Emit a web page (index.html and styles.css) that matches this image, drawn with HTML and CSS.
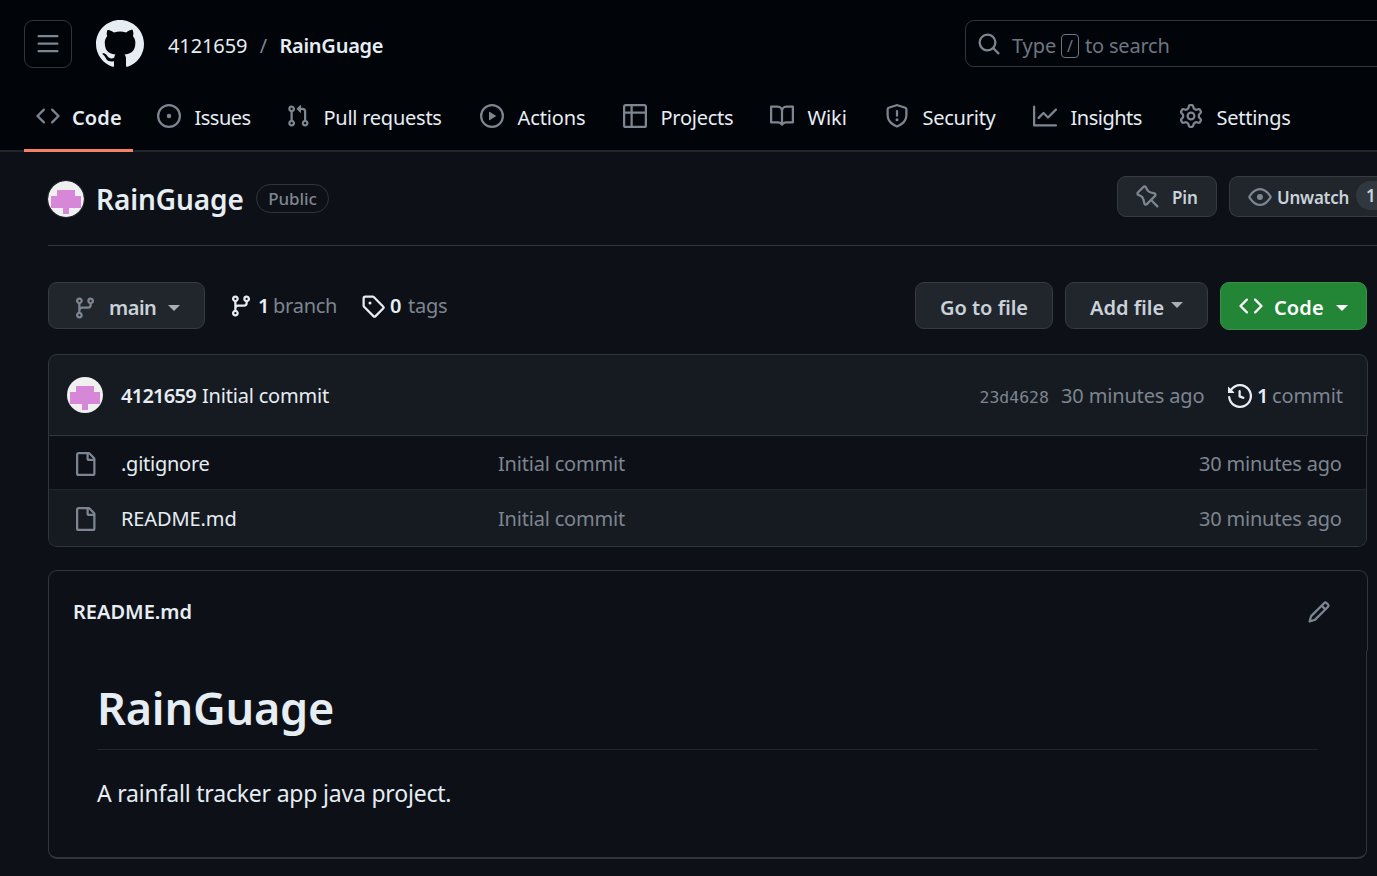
FILE: index.html
```html
<!DOCTYPE html>
<html lang="en">
<head>
<meta charset="utf-8">
<title>4121659/RainGuage</title>
<link rel="stylesheet" href="styles.css">
</head>
<body>
<svg class="sprite" aria-hidden="true">
  <symbol id="code" viewBox="0 0 16 16"><path d="m11.28 3.22 4.25 4.25a.75.75 0 0 1 0 1.06l-4.25 4.25a.749.749 0 0 1-1.275-.326.749.749 0 0 1 .215-.734L13.94 8l-3.72-3.72a.749.749 0 0 1 .326-1.275.749.749 0 0 1 .734.215Zm-6.56 0a.751.751 0 0 1 1.042.018.751.751 0 0 1 .018 1.042L2.06 8l3.72 3.72a.749.749 0 0 1-.326 1.275.749.749 0 0 1-.734-.215L.47 8.53a.75.75 0 0 1 0-1.06Z"/></symbol>
  <symbol id="branch" viewBox="0 0 16 16"><path d="M9.5 3.25a2.25 2.25 0 1 1 3 2.122V6A2.5 2.5 0 0 1 10 8.5H6a1 1 0 0 0-1 1v1.128a2.251 2.251 0 1 1-1.5 0V5.372a2.25 2.25 0 1 1 1.5 0v1.836A2.493 2.493 0 0 1 6 7h4a1 1 0 0 0 1-1v-.628A2.25 2.25 0 0 1 9.5 3.25Zm-6 0a.75.75 0 1 0 1.5 0 .75.75 0 0 0-1.5 0Zm8.25-.75a.75.75 0 1 0 0 1.5.75.75 0 0 0 0-1.5ZM4.25 12a.75.75 0 1 0 0 1.5.75.75 0 0 0 0-1.5Z"/></symbol>
  <symbol id="file" viewBox="0 0 16 16"><path d="M2 1.75C2 .784 2.784 0 3.75 0h6.586c.464 0 .909.184 1.237.513l2.914 2.914c.329.328.513.773.513 1.237v9.586A1.75 1.75 0 0 1 13.25 16h-9.5A1.75 1.75 0 0 1 2 14.25Zm1.75-.25a.25.25 0 0 0-.25.25v12.5c0 .138.112.25.25.25h9.5a.25.25 0 0 0 .25-.25V6h-2.75A1.75 1.75 0 0 1 9 4.25V1.5Zm6.75.062V4.25c0 .138.112.25.25.25h2.688l-.011-.013-2.914-2.914-.013-.011Z"/></symbol>
  <symbol id="avatar" viewBox="0 0 36 36"><circle cx="18" cy="18" r="18" fill="#f0f0f0"/><path fill="#d787d7" d="M9 9h18v6h6v12H21v6h-6v-6H3V15h6z"/></symbol>
</svg>

<header class="site-header">
  <div class="top-bar">
    <button class="menu-button"><svg class="icon" viewBox="0 0 16 16"><path d="M1 2.75A.75.75 0 0 1 1.75 2h12.5a.75.75 0 0 1 0 1.5H1.75A.75.75 0 0 1 1 2.75Zm0 5A.75.75 0 0 1 1.75 7h12.5a.75.75 0 0 1 0 1.5H1.75A.75.75 0 0 1 1 7.75ZM1.75 12h12.5a.75.75 0 0 1 0 1.5H1.75a.75.75 0 0 1 0-1.5Z"/></svg></button>
    <svg class="logo" viewBox="0 0 16 16"><path d="M8 0c4.42 0 8 3.58 8 8a8.013 8.013 0 0 1-5.45 7.59c-.4.08-.55-.17-.55-.38 0-.27.01-1.13.01-2.2 0-.75-.25-1.23-.54-1.48 1.78-.2 3.65-.88 3.65-3.95 0-.88-.31-1.59-.82-2.15.08-.2.36-1.02-.08-2.12 0 0-.67-.22-2.2.82-.64-.18-1.32-.27-2-.27-.68 0-1.36.09-2 .27-1.53-1.03-2.2-.82-2.2-.82-.44 1.1-.16 1.92-.08 2.12-.51.56-.82 1.28-.82 2.15 0 3.06 1.86 3.75 3.64 3.95-.23.2-.44.55-.51 1.07-.46.21-1.61.55-2.33-.66-.15-.24-.6-.83-1.23-.82-.67.01-.27.38.01.53.34.19.73.9.82 1.13.16.45.68 1.31 2.69.94 0 .67.01 1.3.01 1.49 0 .21-.15.45-.55.38A7.995 7.995 0 0 1 0 8c0-4.42 3.58-8 8-8Z"/></svg>
    <div class="crumbs"><span class="owner">4121659</span><span class="slash">/</span><span class="strong">RainGuage</span></div>
    <div class="search">
      <svg class="icon" viewBox="0 0 16 16"><path d="M10.68 11.74a6 6 0 0 1-7.922-8.982 6 6 0 0 1 8.982 7.922l3.04 3.04a.749.749 0 0 1-.326 1.275.749.749 0 0 1-.734-.215ZM11.5 7a4.499 4.499 0 1 0-8.997 0A4.499 4.499 0 0 0 11.5 7Z"/></svg>
      <span class="type">Type</span><kbd class="key">/</kbd><span class="to-search">to search</span>
    </div>
  </div>
  <nav class="tabs">
    <a class="tab active"><svg class="icon"><use href="#code"/></svg><span class="semi">Code</span></a>
    <a class="tab"><svg class="icon" viewBox="0 0 16 16"><path d="M8 9.5a1.5 1.5 0 1 0 0-3 1.5 1.5 0 0 0 0 3Z"/><path d="M8 0a8 8 0 1 1 0 16A8 8 0 0 1 8 0ZM1.5 8a6.5 6.5 0 1 0 13 0 6.5 6.5 0 0 0-13 0Z"/></svg><span class="tight">Issues</span></a>
    <a class="tab"><svg class="icon" viewBox="0 0 16 16"><path d="M1.5 3.25a2.25 2.25 0 1 1 3 2.122v5.256a2.251 2.251 0 1 1-1.5 0V5.372A2.25 2.25 0 0 1 1.5 3.25Zm5.677-.177L9.573.677A.25.25 0 0 1 10 .854V2.5h1A2.5 2.5 0 0 1 13.5 5v5.628a2.251 2.251 0 1 1-1.5 0V5a1 1 0 0 0-1-1h-1v1.646a.25.25 0 0 1-.427.177L7.177 3.427a.25.25 0 0 1 0-.354ZM3.75 2.5a.75.75 0 1 0 0 1.5.75.75 0 0 0 0-1.5Zm0 9.5a.75.75 0 1 0 0 1.5.75.75 0 0 0 0-1.5Zm8.25.75a.75.75 0 1 0 1.5 0 .75.75 0 0 0-1.5 0Z"/></svg><span class="snug">Pull requests</span></a>
    <a class="tab"><svg class="icon" viewBox="0 0 16 16"><path d="M8 0a8 8 0 1 1 0 16A8 8 0 0 1 8 0ZM1.5 8a6.5 6.5 0 1 0 13 0 6.5 6.5 0 0 0-13 0Zm4.879-2.773 4.264 2.559a.25.25 0 0 1 0 .428l-4.264 2.559A.25.25 0 0 1 6 10.559V5.442a.25.25 0 0 1 .379-.215Z"/></svg><span>Actions</span></a>
    <a class="tab"><svg class="icon" viewBox="0 0 16 16"><path d="M0 1.75C0 .784.784 0 1.75 0h12.5C15.216 0 16 .784 16 1.75v12.5A1.75 1.75 0 0 1 14.25 16H1.75A1.75 1.75 0 0 1 0 14.25ZM6.5 6.5v8h7.75a.25.25 0 0 0 .25-.25V6.5Zm8-1.5V1.75a.25.25 0 0 0-.25-.25H6.5V5Zm-13 1.5v7.75c0 .138.112.25.25.25H5v-8ZM5 5V1.5H1.75a.25.25 0 0 0-.25.25V5Z"/></svg><span class="snug">Projects</span></a>
    <a class="tab"><svg class="icon" viewBox="0 0 16 16"><path d="M0 1.75A.75.75 0 0 1 .75 1h4.253c1.227 0 2.317.59 3 1.501A3.743 3.743 0 0 1 11.006 1h4.245a.75.75 0 0 1 .75.75v10.5a.75.75 0 0 1-.75.75h-4.507a2.25 2.25 0 0 0-1.591.659l-.622.621a.75.75 0 0 1-1.06 0l-.622-.621A2.25 2.25 0 0 0 5.258 13H.75a.75.75 0 0 1-.75-.75Zm7.251 10.324.004-5.073-.002-2.253A2.25 2.25 0 0 0 5.003 2.5H1.5v9h3.757a3.75 3.75 0 0 1 1.994.574ZM8.755 4.75l-.004 7.322a3.752 3.752 0 0 1 1.992-.572H14.5v-9h-3.495a2.25 2.25 0 0 0-2.25 2.25Z"/></svg><span>Wiki</span></a>
    <a class="tab"><svg class="icon" viewBox="0 0 16 16"><path d="M7.467.133a1.748 1.748 0 0 1 1.066 0l5.25 1.68A1.75 1.75 0 0 1 15 3.48V7c0 1.566-.32 3.182-1.303 4.682-.983 1.498-2.585 2.813-5.032 3.855a1.697 1.697 0 0 1-1.33 0c-2.447-1.042-4.049-2.357-5.032-3.855C1.32 10.182 1 8.566 1 7V3.48a1.75 1.75 0 0 1 1.217-1.667Zm.61 1.429a.25.25 0 0 0-.153 0l-5.25 1.68a.25.25 0 0 0-.174.238V7c0 1.358.275 2.666 1.057 3.86.784 1.194 2.121 2.34 4.366 3.297a.196.196 0 0 0 .154 0c2.245-.956 3.582-2.104 4.366-3.298C13.225 9.666 13.5 8.36 13.5 7V3.48a.251.251 0 0 0-.174-.237l-5.25-1.68ZM8.75 4.75v3a.75.75 0 0 1-1.5 0v-3a.75.75 0 0 1 1.5 0ZM9 10.5a1 1 0 1 1-2 0 1 1 0 0 1 2 0Z"/></svg><span class="snug">Security</span></a>
    <a class="tab"><svg class="icon" viewBox="0 0 16 16"><path d="M1.5 1.75V13.5h13.75a.75.75 0 0 1 0 1.5H.75a.75.75 0 0 1-.75-.75V1.75a.75.75 0 0 1 1.5 0Zm14.28 2.53-5.25 5.25a.75.75 0 0 1-1.06 0L7 7.06 4.28 9.78a.751.751 0 0 1-1.042-.018.751.751 0 0 1-.018-1.042l3.25-3.25a.75.75 0 0 1 1.06 0L10 7.94l4.72-4.72a.751.751 0 0 1 1.042.018.751.751 0 0 1 .018 1.042Z"/></svg><span class="tight">Insights</span></a>
    <a class="tab"><svg class="icon" viewBox="0 0 16 16"><path d="M8 0a8.2 8.2 0 0 1 .701.031C9.444.095 9.99.645 10.16 1.29l.288 1.107c.018.066.079.158.212.224.231.114.454.243.668.386.123.082.233.09.299.071l1.103-.303c.644-.176 1.392.021 1.82.63.27.385.506.792.704 1.218.315.675.111 1.422-.364 1.891l-.814.806c-.049.048-.098.147-.088.294.016.257.016.515 0 .772-.01.147.038.246.088.294l.814.806c.475.469.679 1.216.364 1.891a7.977 7.977 0 0 1-.704 1.217c-.428.61-1.176.807-1.82.63l-1.102-.302c-.067-.019-.177-.011-.3.071a5.909 5.909 0 0 1-.668.386c-.133.066-.194.158-.211.224l-.29 1.106c-.168.646-.715 1.196-1.458 1.26a8.006 8.006 0 0 1-1.402 0c-.743-.064-1.289-.614-1.458-1.26l-.289-1.106c-.018-.066-.079-.158-.212-.224a5.738 5.738 0 0 1-.668-.386c-.123-.082-.233-.09-.299-.071l-1.103.303c-.644.176-1.392-.021-1.82-.63a8.12 8.12 0 0 1-.704-1.218c-.315-.675-.111-1.422.363-1.891l.815-.806c.05-.048.098-.147.088-.294a6.214 6.214 0 0 1 0-.772c.01-.147-.038-.246-.088-.294l-.815-.806C.635 6.045.431 5.298.746 4.623a7.92 7.92 0 0 1 .704-1.217c.428-.61 1.176-.807 1.82-.63l1.102.302c.067.019.177.011.3-.071.214-.143.437-.272.668-.386.133-.066.194-.158.211-.224l.29-1.106C6.009.645 6.556.095 7.299.03 7.53.01 7.764 0 8 0Zm-.571 1.525c-.036.003-.108.036-.137.146l-.289 1.105c-.147.561-.549.967-.998 1.189-.173.086-.34.183-.5.29-.417.278-.97.423-1.529.27l-1.103-.303c-.109-.03-.175.016-.195.045-.22.312-.412.644-.573.99-.014.031-.021.11.059.19l.815.806c.411.406.562.957.53 1.456a4.709 4.709 0 0 0 0 .582c.032.499-.119 1.05-.53 1.456l-.815.806c-.081.08-.073.159-.059.19.162.346.353.677.573.989.02.03.085.076.195.046l1.102-.303c.56-.153 1.113-.008 1.53.27.161.107.328.204.501.29.447.222.85.629.997 1.189l.289 1.105c.029.109.101.143.137.146a6.6 6.6 0 0 0 1.142 0c.036-.003.108-.036.137-.146l.289-1.105c.147-.561.549-.967.998-1.189.173-.086.34-.183.5-.29.417-.278.97-.423 1.529-.27l1.103.303c.109.029.175-.016.195-.045.22-.313.411-.644.573-.99.014-.031.021-.11-.059-.19l-.815-.806c-.411-.406-.562-.957-.53-1.456a4.709 4.709 0 0 0 0-.582c-.032-.499.119-1.05.53-1.456l.815-.806c.081-.08.073-.159.059-.19a6.464 6.464 0 0 0-.573-.989c-.02-.03-.085-.076-.195-.046l-1.102.303c-.56.153-1.113.008-1.53-.27a4.44 4.44 0 0 0-.501-.29c-.447-.222-.85-.629-.997-1.189l-.289-1.105c-.029-.11-.101-.143-.137-.146a6.6 6.6 0 0 0-1.142 0ZM11 8a3 3 0 1 1-6 0 3 3 0 0 1 6 0ZM9.5 8a1.5 1.5 0 1 0-3.001.001A1.5 1.5 0 0 0 9.5 8Z"/></svg><span class="snug">Settings</span></a>
  </nav>
</header>

<main class="page">
  <section class="repo-head">
    <svg class="avatar"><use href="#avatar"/></svg>
    <h1 class="repo-name">RainGuage</h1>
    <span class="pill">Public</span>
    <div class="repo-actions">
      <button class="btn small pin"><svg class="icon" viewBox="0 0 16 16"><path d="M4.456.734a1.75 1.75 0 0 1 2.826.504l.613 1.327a3.081 3.081 0 0 0 2.084 1.707l2.454.584c1.332.317 1.8 1.972.832 2.94L11.06 10l3.72 3.72a.748.748 0 0 1-.332 1.265.75.75 0 0 1-.729-.205L10 11.06l-2.204 2.205c-.968.968-2.623.5-2.94-.832l-.584-2.454a3.081 3.081 0 0 0-1.707-2.084l-1.327-.613a1.75 1.75 0 0 1-.504-2.826L4.456.734ZM5.92 1.866a.25.25 0 0 0-.404-.072L1.794 5.516a.25.25 0 0 0 .072.404l1.328.613A4.582 4.582 0 0 1 5.73 9.63l.584 2.454a.25.25 0 0 0 .42.12l5.47-5.47a.25.25 0 0 0-.12-.42L9.63 5.73a4.581 4.581 0 0 1-3.098-2.537L5.92 1.866Z"/></svg><span>Pin</span></button>
      <button class="btn small watch"><svg class="icon" viewBox="0 0 16 16"><path d="M8 2c1.981 0 3.671.992 4.933 2.078 1.27 1.091 2.187 2.345 2.637 3.023a1.62 1.62 0 0 1 0 1.798c-.45.678-1.367 1.932-2.637 3.023C11.67 13.008 9.981 14 8 14c-1.981 0-3.671-.992-4.933-2.078C1.797 10.83.88 9.576.43 8.898a1.62 1.62 0 0 1 0-1.798c.45-.677 1.367-1.931 2.637-3.022C4.33 2.992 6.019 2 8 2ZM1.679 7.932a.12.12 0 0 0 0 .136c.411.622 1.241 1.75 2.366 2.717C5.176 11.758 6.527 12.5 8 12.5c1.473 0 2.825-.742 3.955-1.715 1.124-.967 1.954-2.096 2.366-2.717a.12.12 0 0 0 0-.136c-.412-.621-1.242-1.75-2.366-2.717C10.824 4.242 9.473 3.5 8 3.5c-1.473 0-2.825.742-3.955 1.715-1.124.967-1.954 2.096-2.366 2.717ZM8 10a2 2 0 1 1-.001-3.999A2 2 0 0 1 8 10Z"/></svg><span class="unwatch">Unwatch</span><span class="counter">1</span></button>
    </div>
  </section>

  <section class="toolbar">
    <button class="btn branch-btn"><svg class="icon"><use href="#branch"/></svg><span>main</span><i class="caret"></i></button>
    <a class="stat branches"><svg class="icon"><use href="#branch"/></svg><b>1</b><span class="snug">branch</span></a>
    <a class="stat tags"><svg class="icon" viewBox="0 0 16 16"><path d="M1 7.775V2.75C1 1.784 1.784 1 2.75 1h5.025c.464 0 .91.184 1.238.513l6.25 6.25a1.75 1.75 0 0 1 0 2.474l-5.026 5.026a1.75 1.75 0 0 1-2.474 0l-6.25-6.25A1.752 1.752 0 0 1 1 7.775Zm1.5 0c0 .066.026.13.073.177l6.25 6.25a.25.25 0 0 0 .354 0l5.025-5.025a.25.25 0 0 0 0-.354l-6.25-6.25a.25.25 0 0 0-.177-.073H2.75a.25.25 0 0 0-.25.25ZM6 5a1 1 0 1 1 0 2 1 1 0 0 1 0-2Z"/></svg><b>0</b><span class="snug">tags</span></a>
    <div class="file-actions">
      <button class="btn go"><span>Go to file</span></button>
      <button class="btn add"><span>Add file</span><i class="caret"></i></button>
      <button class="btn clone"><svg class="icon"><use href="#code"/></svg><span>Code</span><i class="caret"></i></button>
    </div>
  </section>

  <section class="files">
    <div class="commit-bar">
      <svg class="avatar"><use href="#avatar"/></svg>
      <b class="author">4121659</b><span class="message">Initial commit</span>
      <span class="sha">23d4628</span><span class="when">30 minutes ago</span>
      <svg class="icon history" viewBox="0 0 16 16"><path d="m.427 1.927 1.215 1.215a8.002 8.002 0 1 1-1.6 5.685.75.75 0 1 1 1.493-.154 6.5 6.5 0 1 0 1.18-4.458l1.358 1.358A.25.25 0 0 1 3.896 6H.25A.25.25 0 0 1 0 5.75V2.104a.25.25 0 0 1 .427-.177ZM7.75 4a.75.75 0 0 1 .75.75v2.992l2.028.812a.75.75 0 0 1-.557 1.392l-2.5-1A.751.751 0 0 1 7 8.25v-3.5A.75.75 0 0 1 7.75 4Z"/></svg><b class="count">1</b><span class="commits">commit</span>
    </div>
    <div class="file-list">
      <div class="file-row"><svg class="icon"><use href="#file"/></svg><span class="snug">.gitignore</span><span class="muted">Initial commit</span><span class="muted age">30 minutes ago</span></div>
      <div class="file-row"><svg class="icon"><use href="#file"/></svg><span>README.md</span><span class="muted">Initial commit</span><span class="muted age">30 minutes ago</span></div>
    </div>
  </section>

  <article class="readme">
    <div class="readme-bar"><b class="readme-name">README.md</b><svg class="icon" viewBox="0 0 16 16"><path d="M11.013 1.427a1.75 1.75 0 0 1 2.474 0l1.086 1.086a1.75 1.75 0 0 1 0 2.474l-8.61 8.61c-.21.21-.47.364-.756.445l-3.251.93a.75.75 0 0 1-.927-.928l.929-3.25c.081-.286.235-.547.445-.758l8.61-8.61Zm.176 4.823L9.75 4.81l-6.286 6.287a.253.253 0 0 0-.064.108l-.558 1.953 1.953-.558a.253.253 0 0 0 .108-.064Zm1.238-3.763a.25.25 0 0 0-.354 0L10.811 3.75l1.439 1.44 1.263-1.263a.25.25 0 0 0 0-.354Z"/></svg></div>
    <div class="readme-body">
      <h2 class="readme-title">RainGuage</h2>
      <p class="readme-text">A rainfall tracker app java project.</p>
    </div>
  </article>
</main>
</body>
</html>
```
FILE: styles.css
```css
* { box-sizing: border-box; }
html, body { margin: 0; height: 876px; overflow: hidden; }
body {
  background: #0d1117;
  color: #e6edf3;
  font: 20px/30px "Noto Sans", "Open Sans", sans-serif;
  letter-spacing: -0.1px;
  white-space: nowrap;
}
b, .semi, .strong { font-weight: 600; }
button { font: inherit; letter-spacing: inherit; color: inherit; padding: 0; margin: 0; }
span, b { flex: none; }
.snug { letter-spacing: -0.25px; }
.tight { letter-spacing: -0.5px; }
.sprite { display: none; }
.icon { width: 24px; height: 24px; fill: #7d8590; flex: none; display: block; }
.avatar { width: 36px; height: 36px; flex: none; display: block; }
.muted { color: #7d8590; }

.site-header { height: 152px; background: #010409; border-bottom: 2px solid #21262d; }
.top-bar { display: flex; height: 88px; padding: 20px 0 0 24px; align-items: flex-start; overflow: hidden; }
.menu-button {
  width: 48px; height: 48px; display: grid; place-items: center; flex: none;
  background: none; border: 1px solid #30363d; border-radius: 9px;
}
.logo { width: 48px; height: 48px; margin-left: 24px; fill: #e6edf3; flex: none; }
.crumbs { display: flex; flex: none; margin: 11px 0 0 24px; width: 797px; }
.crumbs .strong { letter-spacing: -0.25px; }
.slash { width: 32px; text-align: center; color: #7d8590; }
.search {
  display: flex; flex: none; width: 520px; height: 47px; padding: 10px 0 0 11px;
  border: 1px solid #30363d; border-radius: 9px; color: #6e7681;
}
.search .icon { margin: 1px 11px 0 0; }
.type { width: 49px; }
.to-search { letter-spacing: -0.2px; }
.key {
  width: 18px; height: 24px; margin: 3px 6px 0 0; border: 1px solid #6e7681; border-radius: 4px;
  font: 16px/22px "Noto Sans", sans-serif; text-align: center;
}
.tabs {
  display: grid; height: 64px; padding-left: 24px;
  grid-template-columns: 121px 129px 194px 143px 147px 115px 148px 146px 150px;
}
.tab { display: flex; gap: 13.5px; height: 64px; padding: 16px 12px 0; }
.tab span { line-height: 28px; }
.tab.active { width: 109px; border-bottom: 3px solid #f78166; gap: 12px; }
.tab.active span { letter-spacing: 0.1px; }

.page { padding-left: 48px; }
.repo-head {
  display: flex; height: 94px; padding-top: 24px; border-bottom: 1px solid #30363d;
  align-items: flex-start;
}
.repo-head .avatar { margin-top: 5px; border-radius: 50%; box-shadow: 0 0 0 1px rgba(240, 246, 252, 0.1); }
.repo-name { margin: 3px 0 0 12px; width: 160px; font-size: 28px; line-height: 40px; font-weight: 600; }
.pill {
  width: 73px; height: 29px; margin-top: 8px; border: 1px solid #30363d; border-radius: 15px;
  color: #7d8590; font-size: 17px; font-weight: 500; line-height: 27px; text-align: center;
}
.repo-actions { display: flex; gap: 12px; margin-left: auto; }
.btn {
  display: flex; align-items: center; flex: none; height: 47px; color: #c9d1d9;
  background: #21262d; border: 1px solid #363b42; border-radius: 9px; font-weight: 600;
}
.btn.small { height: 41px; font-size: 17px; }
.btn.small span { padding-top: 2px; }
.pin { width: 100px; padding-left: 18px; gap: 12px; }
.watch { width: 148px; padding-left: 18px; overflow: hidden; border-right: 0; border-radius: 9px 0 0 9px; }
.watch .icon { margin-right: 5px; }
.unwatch { width: 79px; letter-spacing: -0.25px; text-align: left; }
.btn.small .counter {
  width: 21px; height: 29px; padding: 0 0 0 10px; border-radius: 15px 0 0 15px;
  background: #31373f; line-height: 29px; margin-top: -2px; text-align: left;
}
.toolbar { display: flex; height: 108px; padding-top: 36px; align-items: flex-start; }
.caret { width: 0; height: 0; border: 6px solid transparent; border-bottom: 0; border-top-color: currentColor; opacity: .8; }
.btn.branch-btn { width: 157px; padding: 4px 0 0 24px; }
.branch-btn span { margin: 0 12px; letter-spacing: -0.5px; }
.stat { display: flex; color: #7d8590; margin-top: 9px; }
.stat .icon { fill: #e6edf3; margin-top: 3px; }
.stat b { color: #e6edf3; width: 15px; }
.branches { margin-left: 24px; width: 132px; }
.branches b { margin-left: 5px; }
.tags b { margin-left: 5px; width: 18px; }
.file-actions { display: flex; gap: 12px; margin: 0 10px 0 auto; }
.go { width: 138px; justify-content: center; padding-top: 4px; letter-spacing: 0; }
.add { width: 143px; padding: 4px 0 0 24px; letter-spacing: 0; }
.add .caret { margin: -5px 0 0 7px; }
.clone { width: 147px; height: 48px; padding: 4px 0 0 18px; color: #fff; background: #238636; border-color: #3a9149; letter-spacing: 0.1px; }
.clone .icon { fill: #fff; margin: -4px 11px 0 0; }
.clone .caret { margin: -1px 0 0 12px; opacity: 1; }

.files { width: 1320px; height: 216px; }
.commit-bar {
  display: flex; height: 82px; padding: 22px 0 0 18px; background: #161b22;
  border: 1px solid #30363d; border-radius: 9px 9px 0 0;
}
.author { width: 81px; margin: 4px 0 0 18px; letter-spacing: -0.75px; }
.message { margin-top: 4px; letter-spacing: -0.2px; }
.sha { margin: 6px 12px 0 auto; color: #7d8590; font: 16.5px/30px "DejaVu Sans Mono", monospace; letter-spacing: 0; }
.when, .commits { margin-top: 4px; color: #7d8590; }
.when { width: 143px; letter-spacing: -0.15px; }
.history { fill: #e6edf3; margin: 7px 5px 0 24px; }
.count { width: 15px; margin-top: 4px; }
.commits { width: 95px; }
.file-list {
  width: 1319px; height: 111px; overflow: hidden;
  border: 1px solid #30363d; border-top: 0; border-radius: 0 0 9px 9px;
}
.file-row {
  display: grid; grid-template-columns: 48px 377px 1fr 144px; height: 54px;
  padding: 13px 23px 0 24px; border-bottom: 1px solid #21262d;
}
.file-row .icon { margin-top: 3px; }
.file-row .muted { letter-spacing: -0.2px; }
.file-row + .file-row { height: 57px; padding-top: 14px; background: #161b22; border: 0; }

.readme { width: 1320px; }
.readme-bar {
  display: flex; height: 81px; padding: 26px 36px 0 24px; justify-content: space-between;
  border: 1px solid #30363d; border-bottom: 0; border-radius: 9px 9px 0 0;
}
.readme-name { letter-spacing: 0; }
.readme-bar .icon { margin-top: 3px; }
.readme-body {
  width: 1319px; height: 208px; padding: 18px 48px 0;
  border: solid #30363d; border-width: 0 1px 2px; border-radius: 0 0 9px 9px;
}
.readme-title {
  margin: 0; height: 81px; border-bottom: 1px solid #21262d;
  font-size: 45px; line-height: 77px; font-weight: 600; letter-spacing: -0.2px;
}
.readme-text { margin: 25px 0 0; font-size: 23px; line-height: 36px; letter-spacing: -0.2px; }
```
